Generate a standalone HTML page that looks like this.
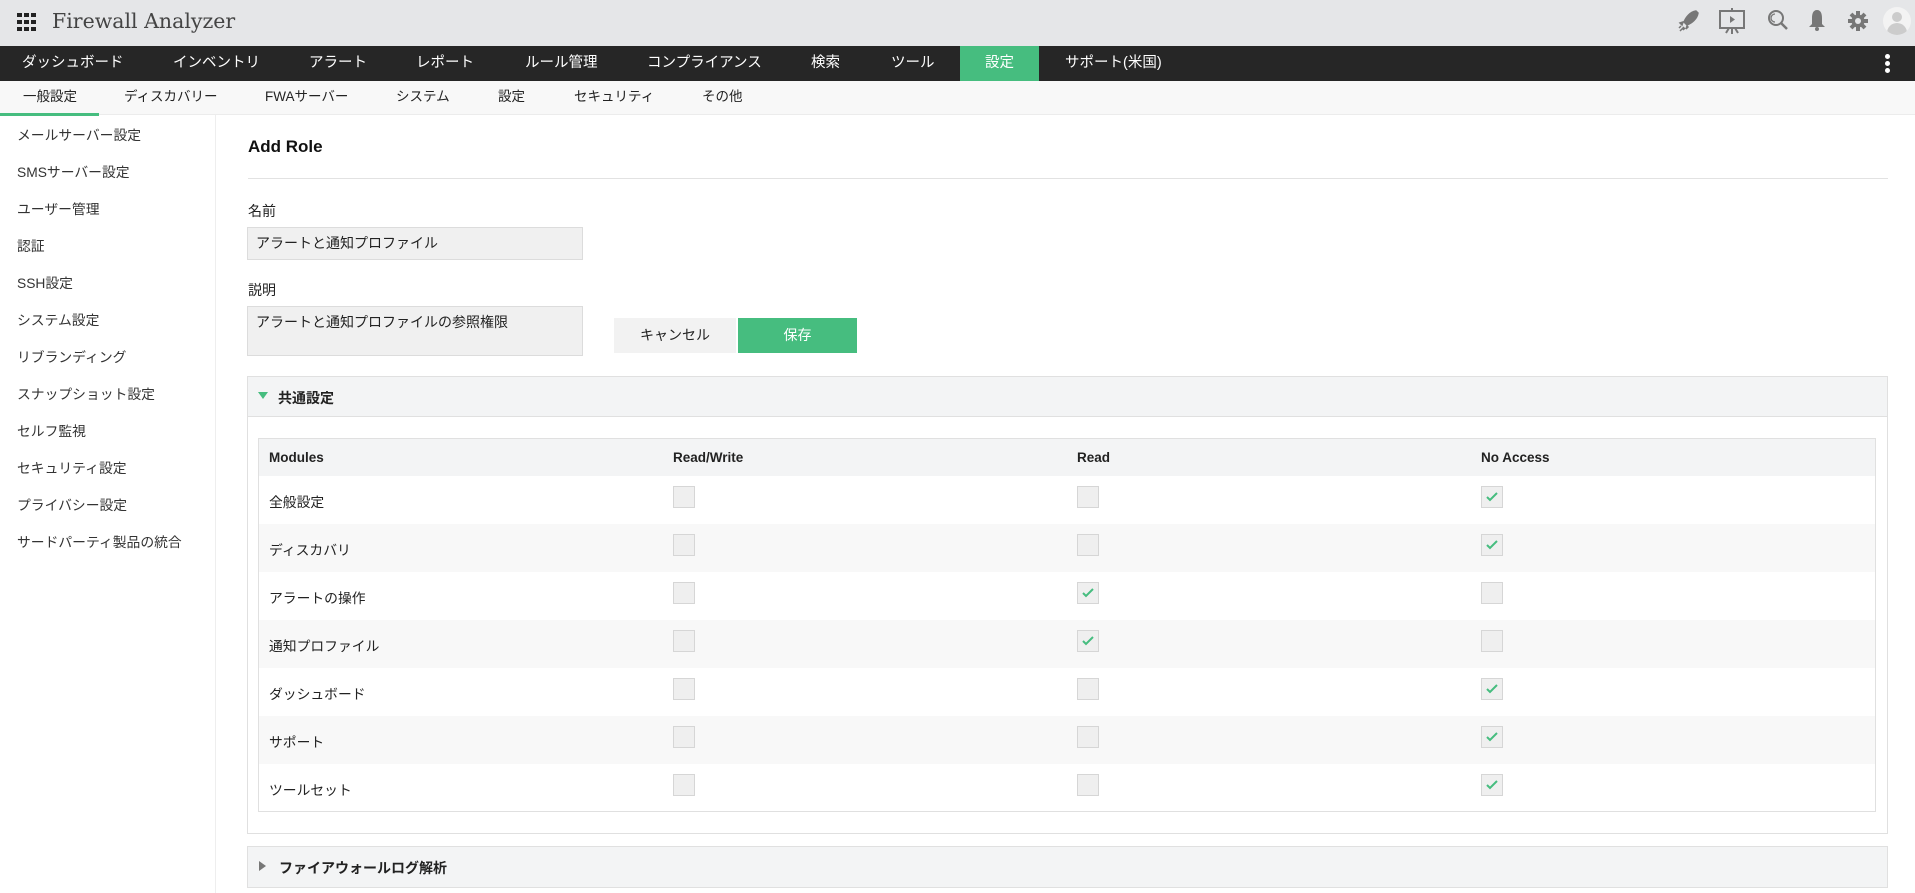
<!DOCTYPE html>
<html><head><meta charset="utf-8"><style>
*{box-sizing:border-box;margin:0;padding:0}
body{width:1915px;height:893px;overflow:hidden;background:#fff;font-family:"Liberation Sans","Noto Sans CJK JP",sans-serif;color:#222;position:relative}
.abs{position:absolute}
.top{left:0;top:0;width:1915px;height:46px;background:#e5e6e8}
.nav{left:0;top:46px;width:1915px;height:35px;background:#262626}
.nav span{position:absolute;top:0;line-height:35px;color:#fff;font-size:14.5px}
.sub{left:0;top:81px;width:1915px;height:34px;background:#f8f8f8;border-bottom:1px solid #ececec}
.sub span{position:absolute;top:0;line-height:32px;font-size:13.5px;color:#222}
.side{left:0;top:115px;width:216px;height:778px;border-right:1px solid #eee}
.side div{position:absolute;left:17px;font-size:13.8px;color:#333}
.cb{position:absolute;width:22px;height:22px;background:#efefef;border:1px solid #d6d6d6}
.cb svg{position:absolute;left:3px;top:3px}
.row{position:absolute;left:259px;width:1616px;height:48px}
.row span{position:absolute;left:10px;top:15px;font-size:13.8px}
</style></head><body>
<div class="abs top"></div>
<svg class="abs" style="left:17px;top:13px" width="20" height="18" viewBox="0 0 20 18"><g fill="#222"><rect x="0" y="0" width="5" height="4"/><rect x="7" y="0" width="5" height="4"/><rect x="14" y="0" width="5" height="4"/><rect x="0" y="7" width="5" height="4"/><rect x="7" y="7" width="5" height="4"/><rect x="14" y="7" width="5" height="4"/><rect x="0" y="14" width="5" height="4"/><rect x="7" y="14" width="5" height="4"/><rect x="14" y="14" width="5" height="4"/></g></svg>
<div class="abs" style="left:52px;top:9px;font-family:'DejaVu Serif','Liberation Serif',serif;font-size:20.5px;color:#444">Firewall Analyzer</div>
<svg class="abs" style="left:1676px;top:9px" width="24" height="24" viewBox="0 0 24 24"><path d="M20 2c-6 1-10 6-12 11l3 3c5-2 10-6 11-12z M7 13l-3 1 2 2z M11 17l-1 3 2-2z M4 22l4-4 M7 21l2-2 M3 19l2-2" fill="#777" stroke="#777" stroke-width="1.5"/></svg>
<svg class="abs" style="left:1718px;top:7px" width="28" height="28" viewBox="0 0 28 28"><rect x="2" y="4" width="24" height="17" fill="none" stroke="#777" stroke-width="2"/><path d="M14 1v3M14 21v6M8 26l3-5M20 26l-3-5" stroke="#777" stroke-width="2"/><path d="M12 9l5 3.5-5 3.5z" fill="#777"/></svg>
<svg class="abs" style="left:1767px;top:9px" width="22" height="22" viewBox="0 0 22 22"><circle cx="9" cy="9" r="7" fill="none" stroke="#777" stroke-width="2"/><path d="M14 14l6 6" stroke="#777" stroke-width="2.5"/><path d="M8 5a4 4 0 0 0 0 8" fill="none" stroke="#777" stroke-width="1.3"/></svg>
<svg class="abs" style="left:1808px;top:9px" width="18" height="22" viewBox="0 0 18 22"><path d="M9 1c-4 0-5 4-5 8v6l-3 3h16l-3-3v-6c0-4-1-8-5-8z" fill="#777"/><circle cx="9" cy="20" r="2" fill="#777"/></svg>
<svg class="abs" style="left:1847px;top:10px" width="22" height="22" viewBox="0 0 22 22"><g stroke="#777" stroke-width="4"><path d="M11 1v20M1 11h20M4 4l14 14M18 4l-14 14"/></g><circle cx="11" cy="11" r="6.5" fill="#777"/><circle cx="11" cy="11" r="3" fill="#e5e6e8"/></svg>
<div class="abs" style="left:1883px;top:7px;width:28px;height:28px;border-radius:50%;background:#f3f3f3;overflow:hidden"><div class="abs" style="left:9px;top:5px;width:10px;height:10px;border-radius:50%;background:#ccc"></div><div class="abs" style="left:4px;top:16px;width:20px;height:16px;border-radius:10px 10px 0 0;background:#ccc"></div></div>
<div class="abs nav">
<span style="left:22px">ダッシュボード</span><span style="left:173px">インベントリ</span><span style="left:309px">アラート</span><span style="left:416px">レポート</span><span style="left:525px">ルール管理</span><span style="left:647px">コンプライアンス</span><span style="left:811px">検索</span><span style="left:891px">ツール</span>
<div class="abs" style="left:960px;top:0;width:79px;height:35px;background:#46bd7f"></div><span style="left:985px">設定</span><span style="left:1065px">サポート(米国)</span>
<div class="abs" style="left:1885px;top:8px;width:5px;height:5px;border-radius:50%;background:#fff"></div><div class="abs" style="left:1885px;top:15px;width:5px;height:5px;border-radius:50%;background:#fff"></div><div class="abs" style="left:1885px;top:22px;width:5px;height:5px;border-radius:50%;background:#fff"></div>
</div>
<div class="abs sub">
<span style="left:23px">一般設定</span><span style="left:124px">ディスカバリー</span><span style="left:265px">FWAサーバー</span><span style="left:396px">システム</span><span style="left:498px">設定</span><span style="left:574px">セキュリティ</span><span style="left:702px">その他</span>
<div class="abs" style="left:0;top:32px;width:99px;height:3px;background:#46bd7f"></div>
</div>
<div class="abs side">
<div style="top:9px">メールサーバー設定</div><div style="top:46px">SMSサーバー設定</div><div style="top:83px">ユーザー管理</div><div style="top:120px">認証</div><div style="top:157px">SSH設定</div><div style="top:194px">システム設定</div><div style="top:231px">リブランディング</div><div style="top:268px">スナップショット設定</div><div style="top:305px">セルフ監視</div><div style="top:342px">セキュリティ設定</div><div style="top:379px">プライバシー設定</div><div style="top:416px">サードパーティ製品の統合</div>
</div>
<div class="abs" style="left:248px;top:137px;font-size:17px;font-weight:bold;color:#111">Add Role</div>
<div class="abs" style="left:248px;top:178px;width:1640px;height:1px;background:#e2e2e2"></div>
<div class="abs" style="left:248px;top:201px;font-size:14px">名前</div>
<div class="abs" style="left:247px;top:227px;width:336px;height:33px;background:#f0f0f0;border:1px solid #dcdcdc;font-size:14px;padding:6px 8px;line-height:18px">アラートと通知プロファイル</div>
<div class="abs" style="left:248px;top:280px;font-size:14px">説明</div>
<div class="abs" style="left:247px;top:306px;width:336px;height:50px;background:#f0f0f0;border:1px solid #dcdcdc;font-size:14px;padding:6px 8px;line-height:18px">アラートと通知プロファイルの参照権限</div>
<div class="abs" style="left:614px;top:318px;width:122px;height:35px;background:#f2f2f2;font-size:14px;text-align:center;line-height:35px">キャンセル</div>
<div class="abs" style="left:738px;top:318px;width:119px;height:35px;background:#46bd7f;color:#fff;font-size:14px;text-align:center;line-height:35px">保存</div>
<div class="abs" style="left:247px;top:376px;width:1641px;height:458px;border:1px solid #e0e0e0"></div>
<div class="abs" style="left:248px;top:377px;width:1639px;height:40px;background:#f3f4f5;border-bottom:1px solid #e0e0e0"></div>
<svg class="abs" style="left:258px;top:392px" width="10" height="8"><path d="M0 0h10L5 7z" fill="#46bd7f"/></svg>
<div class="abs" style="left:278px;top:388px;font-size:14px;font-weight:bold">共通設定</div>
<div class="abs" style="left:258px;top:438px;width:1618px;height:374px;border:1px solid #e0e0e0"></div>
<div class="abs" style="left:259px;top:439px;width:1616px;height:37px;background:#f3f4f5;font-size:13.5px;font-weight:bold">
<span class="abs" style="left:10px;top:11px">Modules</span><span class="abs" style="left:414px;top:11px">Read/Write</span><span class="abs" style="left:818px;top:11px">Read</span><span class="abs" style="left:1222px;top:11px">No Access</span></div>
<div id="rows"></div>
<div class="abs" style="left:247px;top:846px;width:1641px;height:42px;background:#f3f4f5;border:1px solid #e0e0e0"></div>
<svg class="abs" style="left:259px;top:861px" width="8" height="10"><path d="M0 0v10l7-5z" fill="#777"/></svg>
<div class="abs" style="left:279px;top:858px;font-size:14px;font-weight:bold">ファイアウォールログ解析</div>
<script>
var names=["全般設定","ディスカバリ","アラートの操作","通知プロファイル","ダッシュボード","サポート","ツールセット"];
var chk=[2,2,1,1,2,2,2];
var ck='<svg width="14" height="14" viewBox="0 0 14 14"><path d="M2 7l3 3 7-7" fill="none" stroke="#46bd7f" stroke-width="2"/></svg>';
var h="";
for(var i=0;i<7;i++){
 h+='<div class="row" style="top:'+(476+i*48)+'px;height:'+(i==6?39:48)+'px;background:'+(i%2?'#f8f8f8':'#fff')+'"><span>'+names[i]+'</span>';
 for(var c=0;c<3;c++){h+='<div class="cb" style="left:'+(414+c*404)+'px;top:10px">'+(chk[i]==c?ck:'')+'</div>';}
 h+='</div>';
}
document.getElementById('rows').innerHTML=h;
</script>
</body></html>
